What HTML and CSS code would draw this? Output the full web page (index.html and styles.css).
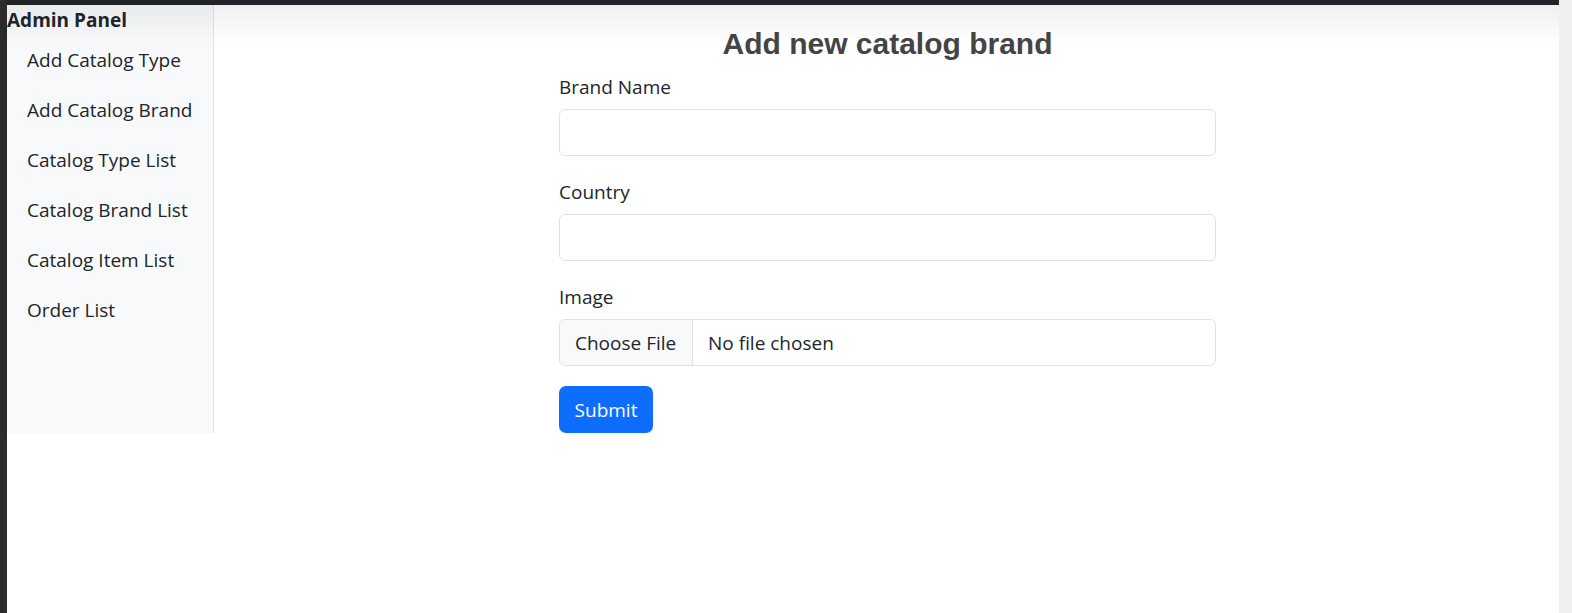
FILE: index.html
```html
<!DOCTYPE html>
<html lang="en">
<head>
<meta charset="utf-8">
<title>Admin Panel</title>
<link rel="stylesheet" href="styles.css">
</head>
<body>
<div class="frame">
  <div class="edge"></div>
  <div class="window">
    <div class="topbar"></div>
    <div class="layout">
      <aside class="sidebar">
        <div class="brand">Admin Panel</div>
        <nav class="nav">
          <a class="nav-link" href="#">Add Catalog Type</a>
          <a class="nav-link" href="#">Add Catalog Brand</a>
          <a class="nav-link" href="#">Catalog Type List</a>
          <a class="nav-link" href="#">Catalog Brand List</a>
          <a class="nav-link" href="#">Catalog Item List</a>
          <a class="nav-link" href="#">Order List</a>
        </nav>
      </aside>
      <main class="main">
        <form class="form">
          <h2 class="title">Add new catalog brand</h2>
          <div class="group">
            <label class="label">Brand Name</label>
            <div class="control"></div>
          </div>
          <div class="group">
            <label class="label">Country</label>
            <div class="control"></div>
          </div>
          <div class="group">
            <label class="label">Image</label>
            <div class="control file">
              <span class="file-btn">Choose File</span>
              <span class="file-name">No file chosen</span>
            </div>
          </div>
          <button type="button" class="btn">Submit</button>
        </form>
      </main>
    </div>
    <div class="shade"></div>
  </div>
  <div class="scrollbar"></div>
</div>
</body>
</html>
```

FILE: styles.css
```css
* { box-sizing: border-box; }
html, body { margin: 0; padding: 0; height: 100%; }
body {
  font-family: "Open Sans", "Noto Sans", sans-serif;
  font-size: 19px;
  color: #212529;
  background: #fff;
  overflow: hidden;
}
.frame {
  display: flex;
  height: 613px;
}
.edge {
  width: 7px;
  background: #2b2b2b;
  flex: none;
}
.window {
  position: relative;
  flex: 1;
  display: flex;
  flex-direction: column;
  background: #fff;
}
.scrollbar {
  width: 13px;
  flex: none;
  background: #f0f0f0;
}
.topbar {
  height: 5px;
  background: #212529;
  flex: none;
}
.shade {
  position: absolute;
  left: 0; right: 0; top: 5px;
  height: 40px;
  background: linear-gradient(to bottom, rgba(0,0,0,0.06), rgba(0,0,0,0));
  pointer-events: none;
}
.layout {
  display: flex;
  align-items: flex-start;
}
.sidebar {
  width: 207px;
  height: 428px;
  flex: none;
  background: #f8f9fa;
  border-right: 1px solid #dee2e6;
}
.brand {
  font-weight: 700;
  font-size: 19px;
  line-height: 30px;
  color: #212529;
}
.nav { display: flex; flex-direction: column; }
.nav-link {
  display: block;
  padding: 10px 20px;
  line-height: 30px;
  color: #212529;
  text-decoration: none;
}
.main {
  flex: 1;
  padding-left: 2px;
}
.form {
  width: 657px;
  margin: 0 auto;
  padding-top: 21px;
}
.title {
  margin: 0 0 10px;
  text-align: center;
  font-family: "Liberation Sans", Arial, sans-serif;
  font-weight: 700;
  font-size: 30px;
  line-height: 36px;
  color: #444;
}
.group { margin-bottom: 21px; }
.label {
  display: block;
  line-height: 30px;
  margin-bottom: 7px;
}
.control {
  height: 47px;
  border: 1px solid #dee2e6;
  border-radius: 6px;
  background: #fff;
}
.file {
  display: flex;
  align-items: stretch;
  overflow: hidden;
}
.file-btn {
  display: flex;
  align-items: center;
  padding: 0 15px;
  background: #f8f9fa;
  border-right: 1px solid #dee2e6;
  width: 133px;
}
.file-name {
  display: flex;
  align-items: center;
  padding-left: 15px;
}
.btn {
  display: block;
  width: 94px;
  height: 47px;
  margin-top: -1px;
  border: 0;
  border-radius: 7px;
  background: #0d6efd;
  color: #fff;
  font: inherit;
  padding: 0;
}
```
